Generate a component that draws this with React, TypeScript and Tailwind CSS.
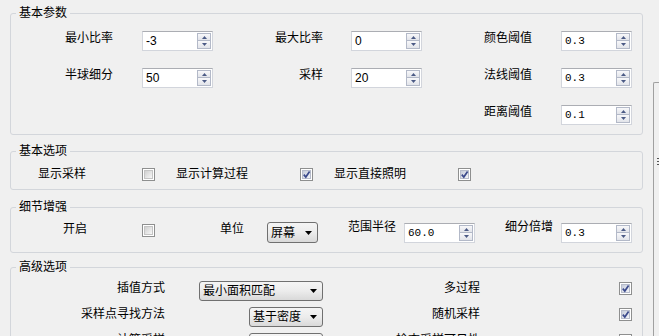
import type { ReactNode } from 'react'
import { clsx as cn } from 'clsx'

function Arrow({ up }: { up?: boolean }) {
  return (
    <svg width="5" height="3" viewBox="0 0 5 3">
      <path d={up ? 'M0 3 L2.5 0 L5 3 Z' : 'M0 0 L5 0 L2.5 3 Z'} fill="#4b5a85" />
    </svg>
  )
}

function Spin({ value, mono = false }: { value: string; mono?: boolean }) {
  return (
    <div className="flex h-[20px] w-[71px] border border-[#d2d5dc] border-t-[#abadb3] bg-white">
      <div
        className={cn(
          'flex-1 pl-[3px] leading-[18px] text-black',
          mono ? "font-['Liberation_Mono',monospace] text-[11px]" : 'text-[12px]'
        )}
      >
        {value}
      </div>
      <div className="my-[1px] mr-[1px] flex w-[14px] flex-col">
        <div className="flex h-1/2 items-center justify-center border border-[#b3b9c8] bg-linear-to-b from-[#f8f8fa] to-[#e2e4ea]">
          <Arrow up />
        </div>
        <div className="flex h-1/2 items-center justify-center border border-t-0 border-[#b3b9c8] bg-linear-to-b from-[#f8f8fa] to-[#e2e4ea]">
          <Arrow />
        </div>
      </div>
    </div>
  )
}

function Drop({ value, className }: { value: string; className: string }) {
  return (
    <div
      className={cn(
        'flex items-center justify-between rounded-[3px] border border-[#707070] bg-linear-to-b from-[#f5f5f5] via-[#ececec] to-[#d9d9d9] pl-[3px] pr-[5px] text-[12px] leading-[14px]',
        className
      )}
    >
      <span>{value}</span>
      <svg width="7" height="4" viewBox="0 0 7 4">
        <path d="M0 0 L7 0 L3.5 4 Z" fill="#000" />
      </svg>
    </div>
  )
}

function Check({ on = false }: { on?: boolean }) {
  return (
    <div className="h-[13px] w-[13px] shrink-0 border border-[#8e8f8f] bg-white p-[1px]">
      <div
        className={cn(
          'flex h-full w-full items-center justify-center border bg-linear-to-br',
          on ? 'border-[#b7bccb] from-[#c6ccda] to-[#f3f4f8]' : 'border-[#c4c4c4] from-[#d0d0d0] to-[#f7f7f7]'
        )}
      >
        {on && (
          <svg width="7" height="7" viewBox="0 0 7 7" className="overflow-visible">
            <path d="M0.8 3.6 L2.8 6 L6.6 0.4" fill="none" stroke="#3b4a8c" strokeWidth="1.7" />
          </svg>
        )}
      </div>
    </div>
  )
}

function Group({ title, className, children }: { title: string; className?: string; children: ReactNode }) {
  return (
    <fieldset className={cn('rounded-[3px] border border-[#d3d6db]', className)}>
      <legend className="ml-[5px] px-[3px] text-[12px] leading-[14px]">{title}</legend>
      {children}
    </fieldset>
  )
}

const PARAMS = [
  { label: '最小比率', value: '-3', col: 'ml-[29px]' },
  { label: '最大比率', value: '0', col: 'ml-[28px]' },
  { label: '颜色阈值', value: '0.3', col: 'ml-[29px]', mono: true },
  { label: '半球细分', value: '50', col: 'ml-[29px]' },
  { label: '采样', value: '20', col: 'ml-[28px]' },
  { label: '法线阈值', value: '0.3', col: 'ml-[29px]', mono: true },
  null,
  null,
  { label: '距离阈值', value: '0.1', col: 'ml-[29px]', mono: true },
]

const OPTIONS = [
  { label: '显示采样', on: false, w: 'w-[104px]' },
  { label: '显示计算过程', on: true, w: 'w-[124px]' },
  { label: '显示直接照明', on: true, w: 'w-[124px]' },
]

const ADVANCED = [
  { label: '插值方式', drop: '最小面积匹配', w: 'h-[20px] w-[124px]', right: '多过程' },
  { label: '采样点寻找方法', drop: '基于密度', w: 'h-[20px] w-[74px]', right: '随机采样' },
  { label: '计算采样', drop: '基于密度', w: 'h-[20px] w-[74px]', right: '检查采样可见性' },
]

export default function App() {
  return (
    <div className="flex h-[336px] w-[659px] overflow-hidden bg-[#f0f0f0] font-['Liberation_Sans','Noto_Sans_CJK_SC',sans-serif] text-[12px] text-black">
      <div className="w-[653px] shrink-0 px-[10px] pt-[6px]">
        <Group title="基本参数">
          <div className="grid grid-cols-[193px_209px_210px] gap-y-[17px] pb-[9px] pl-[9px] pt-[11px]">
            {PARAMS.map((p, i) =>
              p ? (
                <div key={i} className="flex h-[20px] items-start">
                  <span className="flex-1 text-right leading-[14px]">{p.label}</span>
                  <div className={p.col}>
                    <Spin value={p.value} mono={p.mono} />
                  </div>
                </div>
              ) : (
                <div key={i} />
              )
            )}
          </div>
        </Group>

        <Group title="基本选项" className="mt-[9px]">
          <div className="flex gap-[21px] pb-[8px] pl-[27px] pt-[9px]">
            {OPTIONS.map((o) => (
              <div key={o.label} className="flex h-[14px] items-start">
                <span className={cn('leading-[14px]', o.w)}>{o.label}</span>
                <div className="mt-[1px]">
                  <Check on={o.on} />
                </div>
              </div>
            ))}
          </div>
        </Group>

        <Group title="细节增强" className="mt-[10px]">
          <div className="mb-[9px] mt-[8px] flex h-[21px] items-start pl-[9px]">
            <span className="w-[67px] text-right leading-[14px]">开启</span>
            <div className="ml-[55px] mt-[2px]">
              <Check />
            </div>
            <span className="w-[89px] text-right leading-[14px]">单位</span>
            <Drop value="屏幕" className="ml-[23px] h-[21px] w-[51px]" />
            <span className="-mt-[2px] w-[78px] text-right leading-[14px]">范围半径</span>
            <div className="ml-[8px] mt-[1px]">
              <Spin value="60.0" mono />
            </div>
            <span className="-mt-[2px] w-[78px] text-right leading-[14px]">细分倍增</span>
            <div className="ml-[8px] mt-[1px]">
              <Spin value="0.3" mono />
            </div>
          </div>
        </Group>

        <Group title="高级选项" className="mt-[7px]">
          <div className="grid grid-cols-[145px_158px_157px_152px] gap-y-[6px] pb-[9px] pl-[9px] pt-[7px]">
            {ADVANCED.map((a) => [
              <span key={a.label + 'l'} className="h-[20px] text-right leading-[14px]">
                {a.label}
              </span>,
              <div key={a.label + 'd'} className="flex justify-end">
                <Drop value={a.drop} className={a.w} />
              </div>,
              <span key={a.label + 'r'} className="text-right leading-[14px]">
                {a.right}
              </span>,
              <div key={a.label + 'c'} className="flex justify-end pt-[1px]">
                <Check on />
              </div>,
            ])}
          </div>
        </Group>
      </div>

      <div className="flex-1 pt-[82px]">
        <div className="h-full rounded-tl-[2px] border-l border-t border-[#a0a0a0] pl-[3px] pt-[75px]">
          <svg width="2" height="8" viewBox="0 0 2 8">
            <rect x="0" y="0" width="2" height="1" fill="#555" />
            <rect x="0" y="3" width="2" height="1" fill="#555" />
            <rect x="0" y="6" width="2" height="1" fill="#555" />
          </svg>
        </div>
      </div>
    </div>
  )
}
